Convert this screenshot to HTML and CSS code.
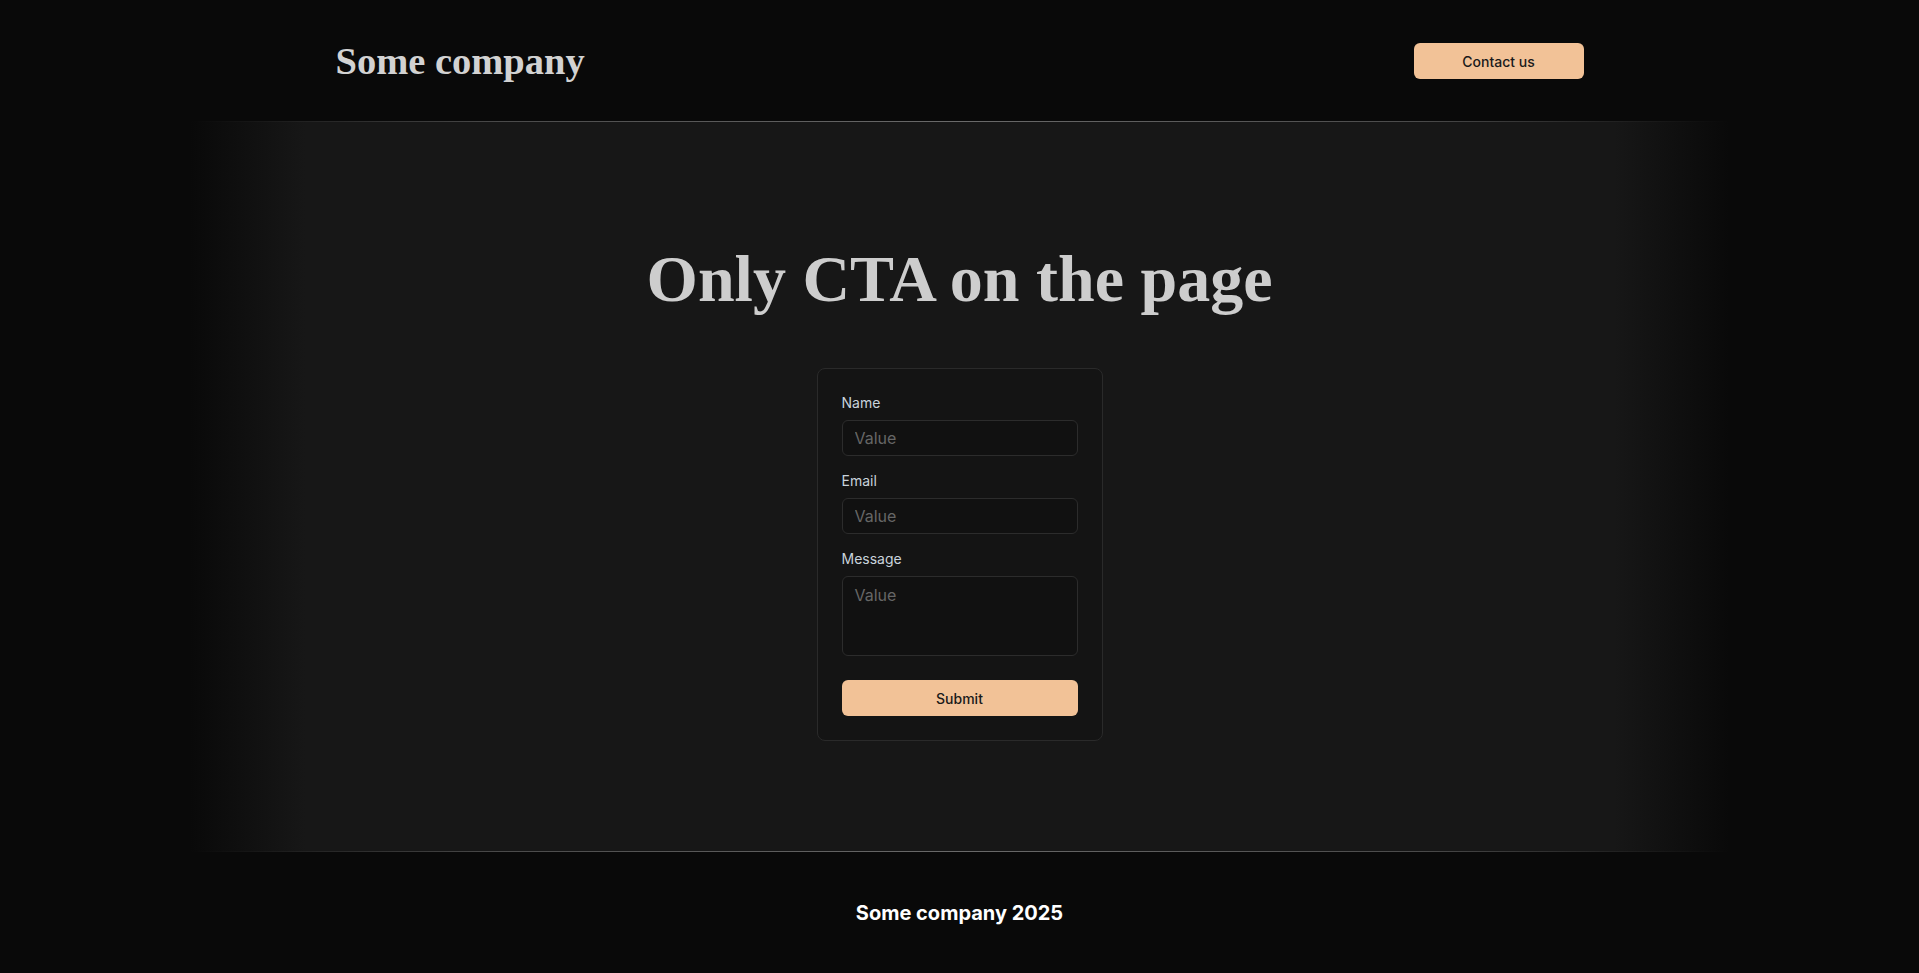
FILE: index.html
```html
<!DOCTYPE html>
<html lang="en">
<head>
<meta charset="utf-8">
<title>Some company</title>
<link rel="stylesheet" href="styles.css">
</head>
<body>
<div class="page">
  <header class="header">
    <div class="header-inner">
      <div class="logo">Some company</div>
      <button class="btn btn-contact" type="button">Contact us</button>
    </div>
  </header>
  <div class="divider"></div>
  <main class="hero">
    <h1 class="hero-title">Only CTA on the page</h1>
    <form class="card">
      <div class="field">
        <label class="label" for="name">Name</label>
        <input class="input" id="name" type="text" placeholder="Value">
      </div>
      <div class="field">
        <label class="label" for="email">Email</label>
        <input class="input" id="email" type="email" placeholder="Value">
      </div>
      <div class="field">
        <label class="label" for="msg">Message</label>
        <textarea class="input textarea" id="msg" placeholder="Value"></textarea>
      </div>
      <button class="btn btn-submit" type="button">Submit</button>
    </form>
  </main>
  <div class="divider"></div>
  <footer class="footer">
    <p class="footer-text">Some company 2025</p>
  </footer>
</div>
</body>
</html>
```

FILE: styles.css
```css
* { box-sizing: border-box; }
html, body { margin: 0; padding: 0; }
body {
  background: #090909;
  color: #d4d4d4;
  font-family: Inter, "Noto Sans", sans-serif;
  height: 973px;
  overflow: hidden;
}
.page {
  display: flex;
  flex-direction: column;
  height: 100%;
}
.header {
  height: 121px;
  display: flex;
  align-items: center;
  justify-content: center;
}
.header-inner {
  width: 1248px;
  display: flex;
  align-items: center;
  justify-content: space-between;
}
.logo {
  font-family: "Liberation Serif", "DejaVu Serif", serif;
  font-weight: 700;
  font-size: 38.5px;
  color: #d2d2d2;
  line-height: 1;
  padding-top: 2px;
}
.btn {
  border: none;
  border-radius: 6px;
  background: #f2c297;
  color: #1a1a1a;
  font-family: Inter, "Noto Sans", sans-serif;
  font-size: 14px;
  font-weight: 500;
  height: 36px;
  cursor: pointer;
}
.btn-contact { width: 170px; padding-top: 2px; }
.divider {
  height: 1px;
  width: 1540px;
  margin: 0 auto;
  background: linear-gradient(to right, rgba(90,90,90,0) 0%, #4a4a4a 20%, #6a6a6a 50%, #4a4a4a 80%, rgba(90,90,90,0) 100%);
}
.hero {
  width: 1540px;
  margin: 0 auto;
  height: 729px;
  background: linear-gradient(to right, #090909 0%, #171717 7.5%, #171717 92.5%, #090909 100%);
  display: flex;
  flex-direction: column;
  align-items: center;
}
.hero-title {
  margin: 124px 0 0;
  font-family: "Liberation Serif", "DejaVu Serif", serif;
  font-weight: 700;
  font-size: 66px;
  line-height: 1;
  color: #cdcdcd;
}
.card {
  margin-top: 56px;
  width: 286px;
  padding: 24px;
  background: #141414;
  border: 1px solid #2a2a2a;
  border-radius: 8px;
  display: flex;
  flex-direction: column;
}
.field {
  display: flex;
  flex-direction: column;
  gap: 8px;
  margin-bottom: 15px;
}
.field:nth-child(3) { margin-bottom: 24px; }
.label {
  font-size: 14px;
  line-height: 19px;
  color: #c9d3dc;
}
.input {
  height: 36px;
  width: 100%;
  padding: 0 12px;
  background: #111111;
  border: 1px solid #2c2c2c;
  border-radius: 6px;
  color: #cccccc;
  font-family: Inter, "Noto Sans", sans-serif;
  font-size: 16px;
  outline: none;
}
.input::placeholder { color: #666666; }
.textarea {
  height: 80px;
  padding: 8px 12px;
  resize: none;
  line-height: 20px;
}
.btn-submit { width: 100%; }
.footer {
  flex: 1;
  display: flex;
  align-items: center;
  justify-content: center;
}
.footer-text {
  margin: 0;
  font-family: Inter, "Noto Sans", sans-serif;
  font-weight: 700;
  font-size: 20px;
  color: #ffffff;
}
```
